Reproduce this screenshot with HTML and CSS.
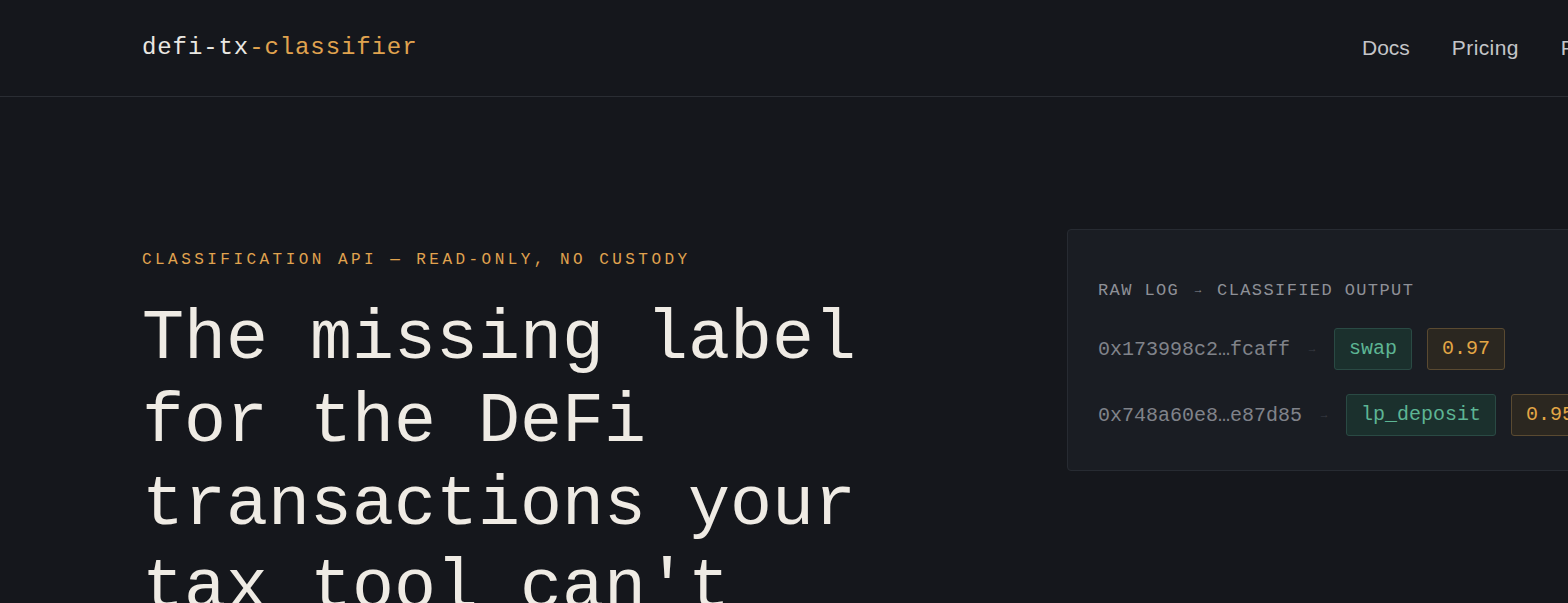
FILE: index.html
```html
<!DOCTYPE html>
<html lang="en">
<head>
<meta charset="utf-8">
<title>defi-tx-classifier</title>
<link rel="stylesheet" href="styles.css">
</head>
<body>
<header class="site-header">
  <div class="header-inner">
    <a class="logo" href="#"><span class="logo-main">defi-tx</span><span class="logo-accent">-classifier</span></a>
    <nav class="nav">
      <a href="#">Docs</a>
      <a href="#">Pricing</a>
      <a href="#">FAQ</a>
    </nav>
  </div>
</header>
<main class="hero">
  <div class="hero-copy">
    <p class="eyebrow">CLASSIFICATION API — READ-ONLY, NO CUSTODY</p>
    <h1 class="headline">The missing label for the DeFi transactions your tax tool can't classify.</h1>
  </div>
  <aside class="card">
    <p class="card-label">RAW LOG <span class="label-arrow">→</span> CLASSIFIED OUTPUT</p>
    <div class="rows">
      <div class="row">
        <span class="hash">0x173998c2…fcaff</span>
        <span class="arrow">→</span>
        <span class="badge badge-type">swap</span>
        <span class="badge badge-score">0.97</span>
      </div>
      <div class="row">
        <span class="hash">0x748a60e8…e87d85</span>
        <span class="arrow">→</span>
        <span class="badge badge-type">lp_deposit</span>
        <span class="badge badge-score">0.95</span>
      </div>
    </div>
  </aside>
</main>
</body>
</html>
```
FILE: styles.css
```css
html, body {
  margin: 0;
  padding: 0;
  background: #15171c;
  overflow: hidden;
}
body {
  font-family: "Liberation Mono", "DejaVu Sans Mono", monospace;
  color: #eeebe4;
}
a { text-decoration: none; color: inherit; }
p { margin: 0; }

.site-header {
  border-bottom: 1px solid #2a2d33;
}
.header-inner {
  display: grid;
  grid-template-columns: 1220px auto;
  align-items: center;
  height: 96px;
  padding-left: 142px;
}
.logo {
  font-family: "Liberation Mono", monospace;
  font-size: 24px;
  letter-spacing: 0.9px;
  line-height: 1;
}
.logo-main { color: #e9e7e2; }
.logo-accent { color: #e0a34f; }

.nav {
  display: flex;
  gap: 42px;
  white-space: nowrap;
  font-family: "Liberation Sans", Arial, sans-serif;
  font-size: 21px;
  color: #c4c5c8;
}
.nav a:nth-child(2) { letter-spacing: 0.4px; }

.hero {
  display: grid;
  grid-template-columns: 925px 560px;
  align-items: start;
  padding: 132px 0 0 142px;
}
.hero-copy {
  padding-top: 21px;
}
.eyebrow {
  font-size: 16px;
  line-height: 20px;
  letter-spacing: 3.46px;
  color: #e0a34f;
  white-space: nowrap;
}
.headline {
  margin: 28px 0 0;
  max-width: 760px;
  font-family: "Liberation Mono", monospace;
  font-weight: 400;
  font-size: 70px;
  line-height: 83px;
  color: #efebe4;
}

.card {
  background: #1a1d23;
  border: 1px solid #272b32;
  border-radius: 4px;
  padding: 50px 30px 34px;
}
.card-label {
  font-size: 17px;
  line-height: 22px;
  letter-spacing: 1.4px;
  color: #8e9097;
  white-space: nowrap;
}
.label-arrow {
  font-size: 11px;
  letter-spacing: 0;
  position: relative;
  top: -2px;
  padding: 0 4px;
}
.rows {
  display: flex;
  flex-direction: column;
  gap: 24px;
  margin-top: 25px;
}
.row {
  display: flex;
  align-items: center;
  gap: 14px;
  white-space: nowrap;
  font-size: 20px;
}
.row .badge-score { margin-left: 1px; }
.hash {
  color: #80838a;
}
.arrow {
  font-size: 11px;
  color: #3a3e46;
  width: 16px;
  text-align: center;
}
.badge {
  display: inline-block;
  height: 42px;
  box-sizing: border-box;
  line-height: 40px;
  padding: 0 14px;
  border-radius: 3px;
  border: 1px solid;
}
.badge-type {
  background: #1b302d;
  border-color: #2a4a44;
  color: #5db594;
}
.badge-score {
  background: #2b2720;
  border-color: #5a4a31;
  color: #e3a645;
}
```
